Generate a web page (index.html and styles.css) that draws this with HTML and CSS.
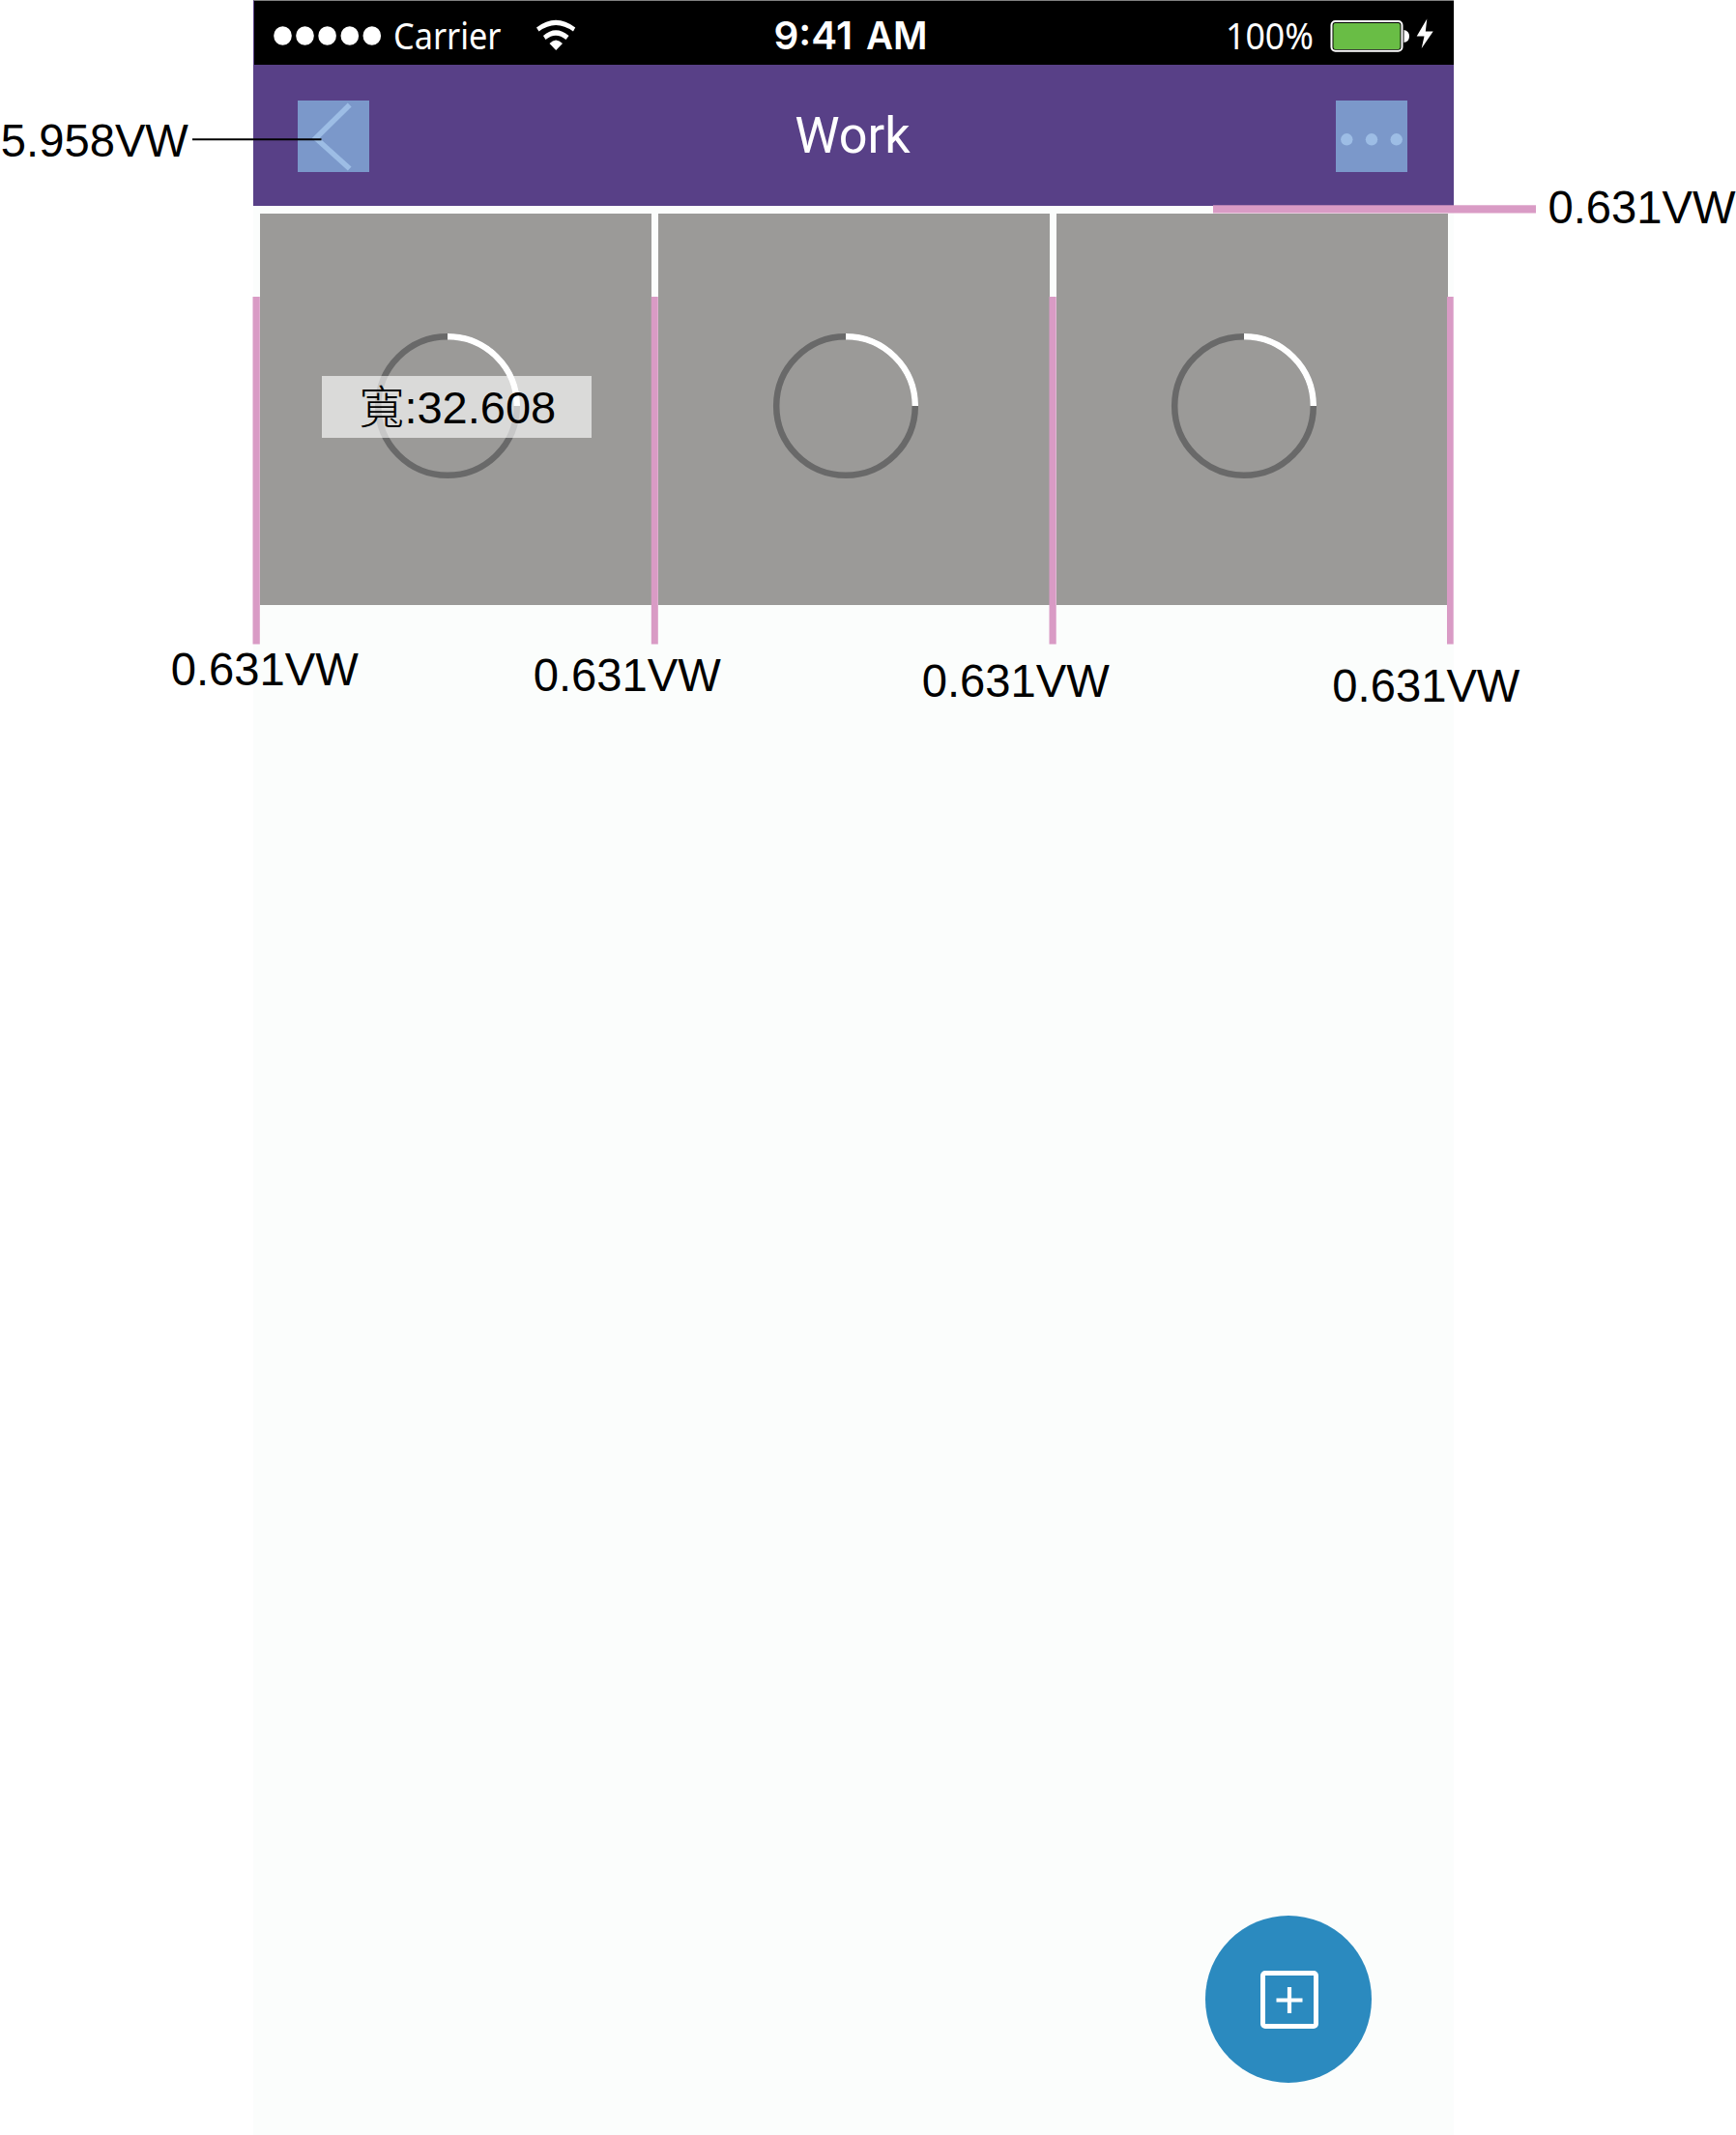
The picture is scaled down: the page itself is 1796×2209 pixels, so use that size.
FILE: index.html
```html
<!DOCTYPE html>
<html lang="zh-Hant">
<head>
<meta charset="utf-8">
<title>Work</title>
<link rel="stylesheet" href="styles.css">
</head>
<body>
<main class="board">
  <section class="phone">
    <header class="statusbar">
      <svg class="status-art" viewBox="0 0 1242 67" role="img" aria-label="Status bar">
        <g fill="#fff">
          <ellipse cx="30.5" cy="37" rx="9.3" ry="9.8"/>
          <ellipse cx="53.5" cy="37" rx="9.3" ry="9.8"/>
          <ellipse cx="76.6" cy="37" rx="9.3" ry="9.8"/>
          <ellipse cx="99.8" cy="37" rx="9.3" ry="9.8"/>
          <ellipse cx="122.8" cy="37" rx="9.3" ry="9.8"/>
          <text class="status-text" x="145" y="51" textLength="111.5" lengthAdjust="spacingAndGlyphs">Carrier</text>
          <path d="M293 28.5Q313 13 333.2 28.5L331 32.5Q313 19.5 295.5 32.5Z"/>
          <path d="M300 37Q313 25.5 326.5 37L323.5 41Q313 32.5 302.5 41Z"/>
          <path d="M306.5 45Q313 38 320 45L313.2 52Z"/>
          <text class="status-time" x="538.5" y="51" textLength="81.5" lengthAdjust="spacingAndGlyphs">9:41</text>
          <text class="status-time" x="634" y="51" textLength="63.5" lengthAdjust="spacingAndGlyphs">AM</text>
          <text class="status-text" x="1006" y="51" textLength="91" lengthAdjust="spacingAndGlyphs">100%</text>
          <path d="M1190.5 31Q1196 32 1196 37.5T1190.5 44Z"/>
          <path d="M1214.3 19.5L1203.7 37.5H1211.5L1208.7 50L1220.7 32.5H1212.8Z"/>
        </g>
        <rect x="1115.5" y="22" width="73" height="30.7" rx="4" fill="none" stroke="#fff" stroke-width="2"/>
        <rect x="1117.5" y="24" width="69" height="27" rx="2" fill="#69bd45"/>
      </svg>
    </header>
    <nav class="navbar">
      <svg class="nav-button" viewBox="0 0 74 74" aria-label="Back">
        <path d="M53.7 4.5L18.7 39L53.7 70.5" fill="none" stroke="#9dbde5" stroke-width="5.5"/>
      </svg>
      <span class="nav-title">Work</span>
      <svg class="nav-button" viewBox="0 0 74 74" aria-label="More">
        <g fill="#9dbde5">
          <circle cx="11.3" cy="40.3" r="6.2"/>
          <circle cx="37" cy="40.3" r="6.2"/>
          <circle cx="62.7" cy="40.3" r="6.2"/>
        </g>
      </svg>
    </nav>
    <div class="gallery">
      <div class="tile"><svg class="ring" viewBox="0 0 152 152"><circle cx="76" cy="76" r="71.8"/><path d="M76 4.2A71.8 71.8 0 0 1 147.8 76"/></svg></div>
      <div class="tile"><svg class="ring" viewBox="0 0 152 152"><circle cx="76" cy="76" r="71.8"/><path d="M76 4.2A71.8 71.8 0 0 1 147.8 76"/></svg></div>
      <div class="tile"><svg class="ring" viewBox="0 0 152 152"><circle cx="76" cy="76" r="71.8"/><path d="M76 4.2A71.8 71.8 0 0 1 147.8 76"/></svg></div>
    </div>
    <button class="fab" aria-label="Add">
      <svg class="fab-icon" viewBox="0 0 60 60" fill="none" stroke="#fff">
        <rect x="2.5" y="2.5" width="55" height="55" rx="2.5" stroke-width="5"/>
        <path d="M16.5 30.5H43.5M30 17V44" stroke-width="4.2"/>
      </svg>
    </button>
  </section>

  <div class="size-label"><span class="cjk">寬</span>:32.608</div>

  <svg class="guides" viewBox="0 0 1796 2209" aria-hidden="true">
    <g fill="#d99bc5">
      <rect x="1255" y="212.3" width="334" height="8.2"/>
      <rect x="261.5" y="307" width="7.3" height="359.5"/>
      <rect x="673.8" y="307" width="7" height="359.5"/>
      <rect x="1085.5" y="307" width="7.2" height="359.5"/>
      <rect x="1497" y="307" width="6.7" height="359.5"/>
    </g>
    <path d="M199 144.3H332.5" stroke="#000" stroke-width="2"/>
  </svg>
  <span class="note note-icon">5.958VW</span>
  <span class="note note-top">0.631VW</span>
  <span class="note note-a">0.631VW</span>
  <span class="note note-b">0.631VW</span>
  <span class="note note-c">0.631VW</span>
  <span class="note note-d">0.631VW</span>
</main>
</body>
</html>
```

FILE: styles.css
```css
* { box-sizing: border-box; }
body { margin: 0; background: #fff; }
svg { display: block; }

.board {
  position: relative;
  width: 1796px;
  height: 2209px;
  overflow: hidden;
  padding-left: 261.6px;
  font-family: "Liberation Sans", Arial, sans-serif;
}

.phone {
  display: flex;
  flex-direction: column;
  width: 1242px;
  height: 2209px;
  background: #fbfdfc;
}

.statusbar { height: 67px; background: #000; border-left: 1px solid #584087; border-top: 1px solid #808080; }
.status-art { width: 1242px; height: 67px; margin: -1px 0 0 -1px; }
.status-text { font: 400 38px "Noto Sans", "Open Sans", sans-serif; }
.status-time { font: 600 40px Inter, sans-serif; }

.navbar {
  display: flex;
  justify-content: space-between;
  align-items: flex-start;
  height: 145.5px;
  padding: 37px 47.6px 0 46.4px;
  background: #584087;
}
.nav-button { width: 74px; height: 74px; background: #7b98ca; }
.nav-title { margin-top: 2px; color: #fff; font: 400 52.2px/70px Roboto, sans-serif; }

.gallery {
  display: grid;
  grid-template-columns: repeat(3, 405px);
  gap: 7px;
  padding: 8px 0 0 7px;
}
.tile { height: 405.5px; padding: 123.5px 0 0 118.8px; background: #9b9a98; }
.ring { width: 152px; height: 152px; fill: none; stroke-width: 6.5px; }
.ring circle { stroke: #696969; }
.ring path { stroke: #fff; }

.fab {
  display: flex;
  align-items: center;
  justify-content: center;
  align-self: flex-end;
  width: 172.6px;
  height: 172.6px;
  margin: auto 84.3px 54.5px 0;
  padding: 2px 0 0 1px;
  border: 0;
  border-radius: 50%;
  background: #2b8abf;
}
.fab-icon { width: 60px; height: 60px; }

.guides { position: absolute; left: 0; top: 0; width: 1796px; height: 2209px; }

.size-label {
  position: absolute;
  left: 332.6px;
  top: 389.3px;
  width: 279.4px;
  height: 63.7px;
  padding-left: 38.8px;
  background: rgba(255, 255, 255, .63);
  font-size: 47px;
  line-height: 65px;
  white-space: nowrap;
}
.cjk { font-family: "Noto Sans CJK TC", sans-serif; font-weight: 300; line-height: 1; }

.note { position: absolute; font-size: 47.2px; line-height: 48px; white-space: nowrap; }
.note-icon { left: .8px; top: 122px; }
.note-top { left: 1601.4px; top: 191px; }
.note-a { left: 176.7px; top: 669px; }
.note-b { left: 551.7px; top: 675px; }
.note-c { left: 953.7px; top: 681px; }
.note-d { left: 1378.3px; top: 686px; }
```
